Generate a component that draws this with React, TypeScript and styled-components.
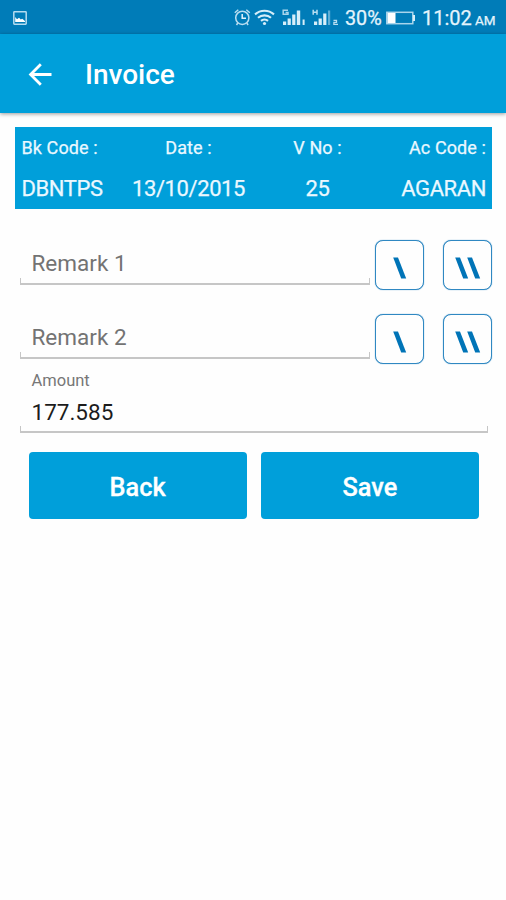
import React from 'react';
import styled, { createGlobalStyle } from 'styled-components';

const GlobalStyle = createGlobalStyle`
  * { box-sizing: border-box; }
  body { margin: 0; background: #fefefe; font-family: Roboto, "Liberation Sans", sans-serif; }
  svg { display: block; flex: none; }
`;

const Screen = styled.div`
  width: 506px;
  height: 900px;
  overflow: hidden;
  background: #fefefe;
`;

const StatusBar = styled.header`
  height: 34px;
  display: flex;
  align-items: center;
  padding: 2px 10px 0 13px;
  background: #007cb8;
  color: #e4f4fc;
`;

const StatusIcons = styled.div`
  display: flex;
  align-items: center;
  margin-left: auto;
`;

const Slot = styled.div<{ $w: number }>`
  width: ${(p) => p.$w}px;
  flex: none;
  white-space: nowrap;
`;

const StatusText = styled.span<{ $size: number; $drop?: number }>`
  display: block;
  font-size: ${(p) => p.$size}px;
  line-height: 24px;
  padding-top: ${(p) => p.$drop ?? 0}px;
  -webkit-text-stroke: 0.25px currentColor;
`;

const AppBar = styled.div`
  height: 79px;
  display: flex;
  align-items: center;
  padding: 2px 0 0 28px;
  background: #009fda;
  box-shadow: 0 1px 4px rgba(0, 0, 0, 0.4);
`;

const Title = styled.h1`
  margin: 0 0 0 32px;
  padding-top: 1px;
  color: #fff;
  font-size: 28px;
  font-weight: 500;
  line-height: 36px;
`;

const Summary = styled.section`
  display: grid;
  grid-template-columns: 100px 134px 124px 1fr;
  margin: 14px 14px 0 14.5px;
  height: 82px;
  padding: 0 6px 0 7px;
  background: #009fda;
  color: #eaf8ff;
`;

const Cell = styled.div<{ $align: string }>`
  text-align: ${(p) => p.$align};
  white-space: nowrap;
`;

const CellLabel = styled.div`
  height: 41px;
  line-height: 41px;
  font-size: 18px;
  letter-spacing: 0.1px;
  -webkit-text-stroke: 0.25px currentColor;
`;

const CellValue = styled.div`
  height: 41px;
  line-height: 42px;
  font-size: 22px;
  letter-spacing: -0.4px;
  -webkit-text-stroke: 0.25px currentColor;
`;

const Form = styled.form`
  padding: 31px 14px 0 20px;
`;

const Remarks = styled.div`
  display: flex;
  flex-direction: column;
  gap: 24px;
  margin-bottom: 6px;
`;

const RemarkRow = styled.div`
  display: flex;
  height: 50px;
`;

const Field = styled.div<{ $w: number; $h: number }>`
  width: ${(p) => p.$w}px;
  height: ${(p) => p.$h}px;
  display: flex;
  flex-direction: column;
  justify-content: flex-end;
`;

const FieldText = styled.div<{ $color: string; $lift?: number }>`
  padding-left: 11.5px;
  padding-bottom: ${(p) => p.$lift ?? 0}px;
  font-size: 22.5px;
  line-height: 28px;
  color: ${(p) => p.$color};
`;

const Caption = styled.div`
  padding-left: 11.5px;
  margin-bottom: 7px;
  font-size: 16.5px;
  line-height: 20px;
  color: #777;
`;

const Underline = styled.div`
  height: 7px;
  flex: none;
  border: solid #c6c6c6;
  border-width: 0 1px 2px;
`;

const KeyButton = styled.button<{ $gap: number }>`
  width: 49px;
  height: 50px;
  flex: none;
  margin-left: ${(p) => p.$gap}px;
  padding: 5px 0 0;
  display: flex;
  align-items: center;
  justify-content: center;
  border: 1px solid #2f88c2;
  box-shadow: 0 0 1px #2f88c2;
  border-radius: 8px;
  background: #fefefe;
`;

const Actions = styled.div`
  display: flex;
  gap: 14px;
  margin: 19px 13px 0 8.5px;
`;

const ActionButton = styled.button`
  flex: 1;
  height: 67px;
  border: 0;
  border-radius: 4px;
  padding: 5px 0 0;
  background: #009fda;
  color: #fff;
  font: 500 25.3px/32px Roboto, sans-serif;
  -webkit-text-stroke: 0.3px currentColor;
`;

const PictureIcon = () => (
  <svg width="14" height="14" viewBox="0 0 14 14">
    <rect x="0.8" y="0.8" width="12.4" height="12.4" rx="0.6" fill="none" stroke="#b4dcf0" strokeWidth="1.5" />
    <path d="M2.2 11V6l1.8 2.2L6 6.8l1.8 1.6 1.4-.6L12 10v1z" fill="#fff" />
  </svg>
);

const AlarmIcon = () => (
  <svg width="17" height="18" viewBox="0 0 17 18" fill="none" stroke="#b9def1" strokeWidth="1.5">
    <circle cx="8.3" cy="8.8" r="6.6" />
    <path d="M0.8 3.8 4.3 0.8M12.3 0.8 15.8 3.8M3.8 14l-1.3 2M12.8 14l1.3 2" />
    <path d="M8.2 5v4.3h3.8" stroke="#e4f4fc" />
  </svg>
);

const WifiIcon = () => (
  <svg width="21" height="18" viewBox="0 0 21 18" fill="none" stroke="#d6eef9" strokeWidth="2.1">
    <path d="M1 5.4a14.2 14.2 0 0 1 19 0M4 8.8a9.8 9.8 0 0 1 13 0M7 11.9a5.3 5.3 0 0 1 7 0" />
    <circle cx="10.5" cy="14.5" r="1.6" fill="#d6eef9" stroke="none" />
  </svg>
);

const SignalOneIcon = () => (
  <svg width="25" height="18" viewBox="0 0 25 18" fill="#d6eef9">
    <path d="M6 1.2H1.2v4H6V3.4H3.6" fill="none" stroke="#a9d5ec" strokeWidth="1.5" />
    <rect x="1" y="12.5" width="3.2" height="3.5" />
    <rect x="5.6" y="9.5" width="3.2" height="6.5" />
    <rect x="10.2" y="5.5" width="3.2" height="10.5" />
    <rect x="14.8" y="1.5" width="3.4" height="14.5" />
    <rect x="20.6" y="10.5" width="2" height="5.5" />
  </svg>
);

const SignalTwoIcon = () => (
  <svg width="27" height="18" viewBox="0 0 27 18" fill="#d6eef9">
    <path d="M1.2 0.8v5M5 0.8v5M1.2 3.3H5" fill="none" stroke="#b9def1" strokeWidth="1.5" />
    <rect x="2" y="12.5" width="3.2" height="3.5" />
    <rect x="6.6" y="9.5" width="3.2" height="6.5" />
    <rect x="11.2" y="4.5" width="3.2" height="11.5" />
    <rect x="16" y="1.5" width="2.2" height="14.5" fill="#60aed5" />
    <path d="M21.5 11.4h3v2h-2.6v2H26" fill="none" stroke="#b9def1" strokeWidth="1.3" />
  </svg>
);

const BatteryIcon = () => (
  <svg width="30" height="14" viewBox="0 0 30 14">
    <rect x="0.8" y="1.3" width="26" height="11.4" fill="none" stroke="#a9d5ec" strokeWidth="1.5" />
    <rect x="1.5" y="2" width="8" height="10" fill="#fff" />
    <path d="M28 4v6" stroke="#d6eef9" strokeWidth="2" />
  </svg>
);

const BackArrow = () => (
  <svg width="25" height="24" viewBox="0 0 25 24" fill="none" stroke="#fff" strokeWidth="2.8">
    <path d="M23.5 11.5H3M12.8 1.3 2.6 11.5l10.2 10.2" />
  </svg>
);

const Slashes = ({ count }: { count: 1 | 2 }) => (
  <svg width="27" height="22" viewBox="0 0 27 22" fill="#0074b7">
    {count === 1 ? (
      <path d="M7.2 0.4h4.8l8.2 21.2h-5z" />
    ) : (
      <path d="M1.2 0.4h4.8l8.2 21.2h-5zM13.2 0.4h4.8l8.2 21.2h-5z" />
    )}
  </svg>
);

const cells = [
  { label: 'Bk Code :', value: 'DBNTPS', align: 'left' },
  { label: 'Date :', value: '13/10/2015', align: 'center' },
  { label: 'V No :', value: '25', align: 'center' },
  { label: 'Ac Code :', value: 'AGARAN', align: 'right' },
];

export default function App() {
  return (
    <Screen>
      <GlobalStyle />
      <StatusBar>
        <PictureIcon />
        <StatusIcons>
          <Slot $w={20}><AlarmIcon /></Slot>
          <Slot $w={28}><WifiIcon /></Slot>
          <Slot $w={30}><SignalOneIcon /></Slot>
          <Slot $w={33}><SignalTwoIcon /></Slot>
          <Slot $w={41}><StatusText $size={19.8} $drop={1}>30%</StatusText></Slot>
          <Slot $w={36}><BatteryIcon /></Slot>
          <Slot $w={53}><StatusText $size={20}>11:02</StatusText></Slot>
          <Slot $w={21}><StatusText $size={13.5} $drop={3}>AM</StatusText></Slot>
        </StatusIcons>
      </StatusBar>
      <AppBar>
        <BackArrow />
        <Title>Invoice</Title>
      </AppBar>
      <Summary>
        {cells.map((c) => (
          <Cell key={c.label} $align={c.align}>
            <CellLabel>{c.label}</CellLabel>
            <CellValue>{c.value}</CellValue>
          </Cell>
        ))}
      </Summary>
      <Form>
        <Remarks>
          {['Remark 1', 'Remark 2'].map((name) => (
            <RemarkRow key={name}>
              <Field $w={350} $h={45}>
                <FieldText $color="#737373" $lift={1}>{name}</FieldText>
                <Underline />
              </Field>
              <KeyButton type="button" $gap={5} aria-label="Single"><Slashes count={1} /></KeyButton>
              <KeyButton type="button" $gap={19} aria-label="Double"><Slashes count={2} /></KeyButton>
            </RemarkRow>
          ))}
        </Remarks>
        <Field $w={468} $h={63}>
          <Caption>Amount</Caption>
          <FieldText $color="#1c1c1c">177.585</FieldText>
          <Underline />
        </Field>
        <Actions>
          <ActionButton type="button">Back</ActionButton>
          <ActionButton type="button">Save</ActionButton>
        </Actions>
      </Form>
    </Screen>
  );
}
